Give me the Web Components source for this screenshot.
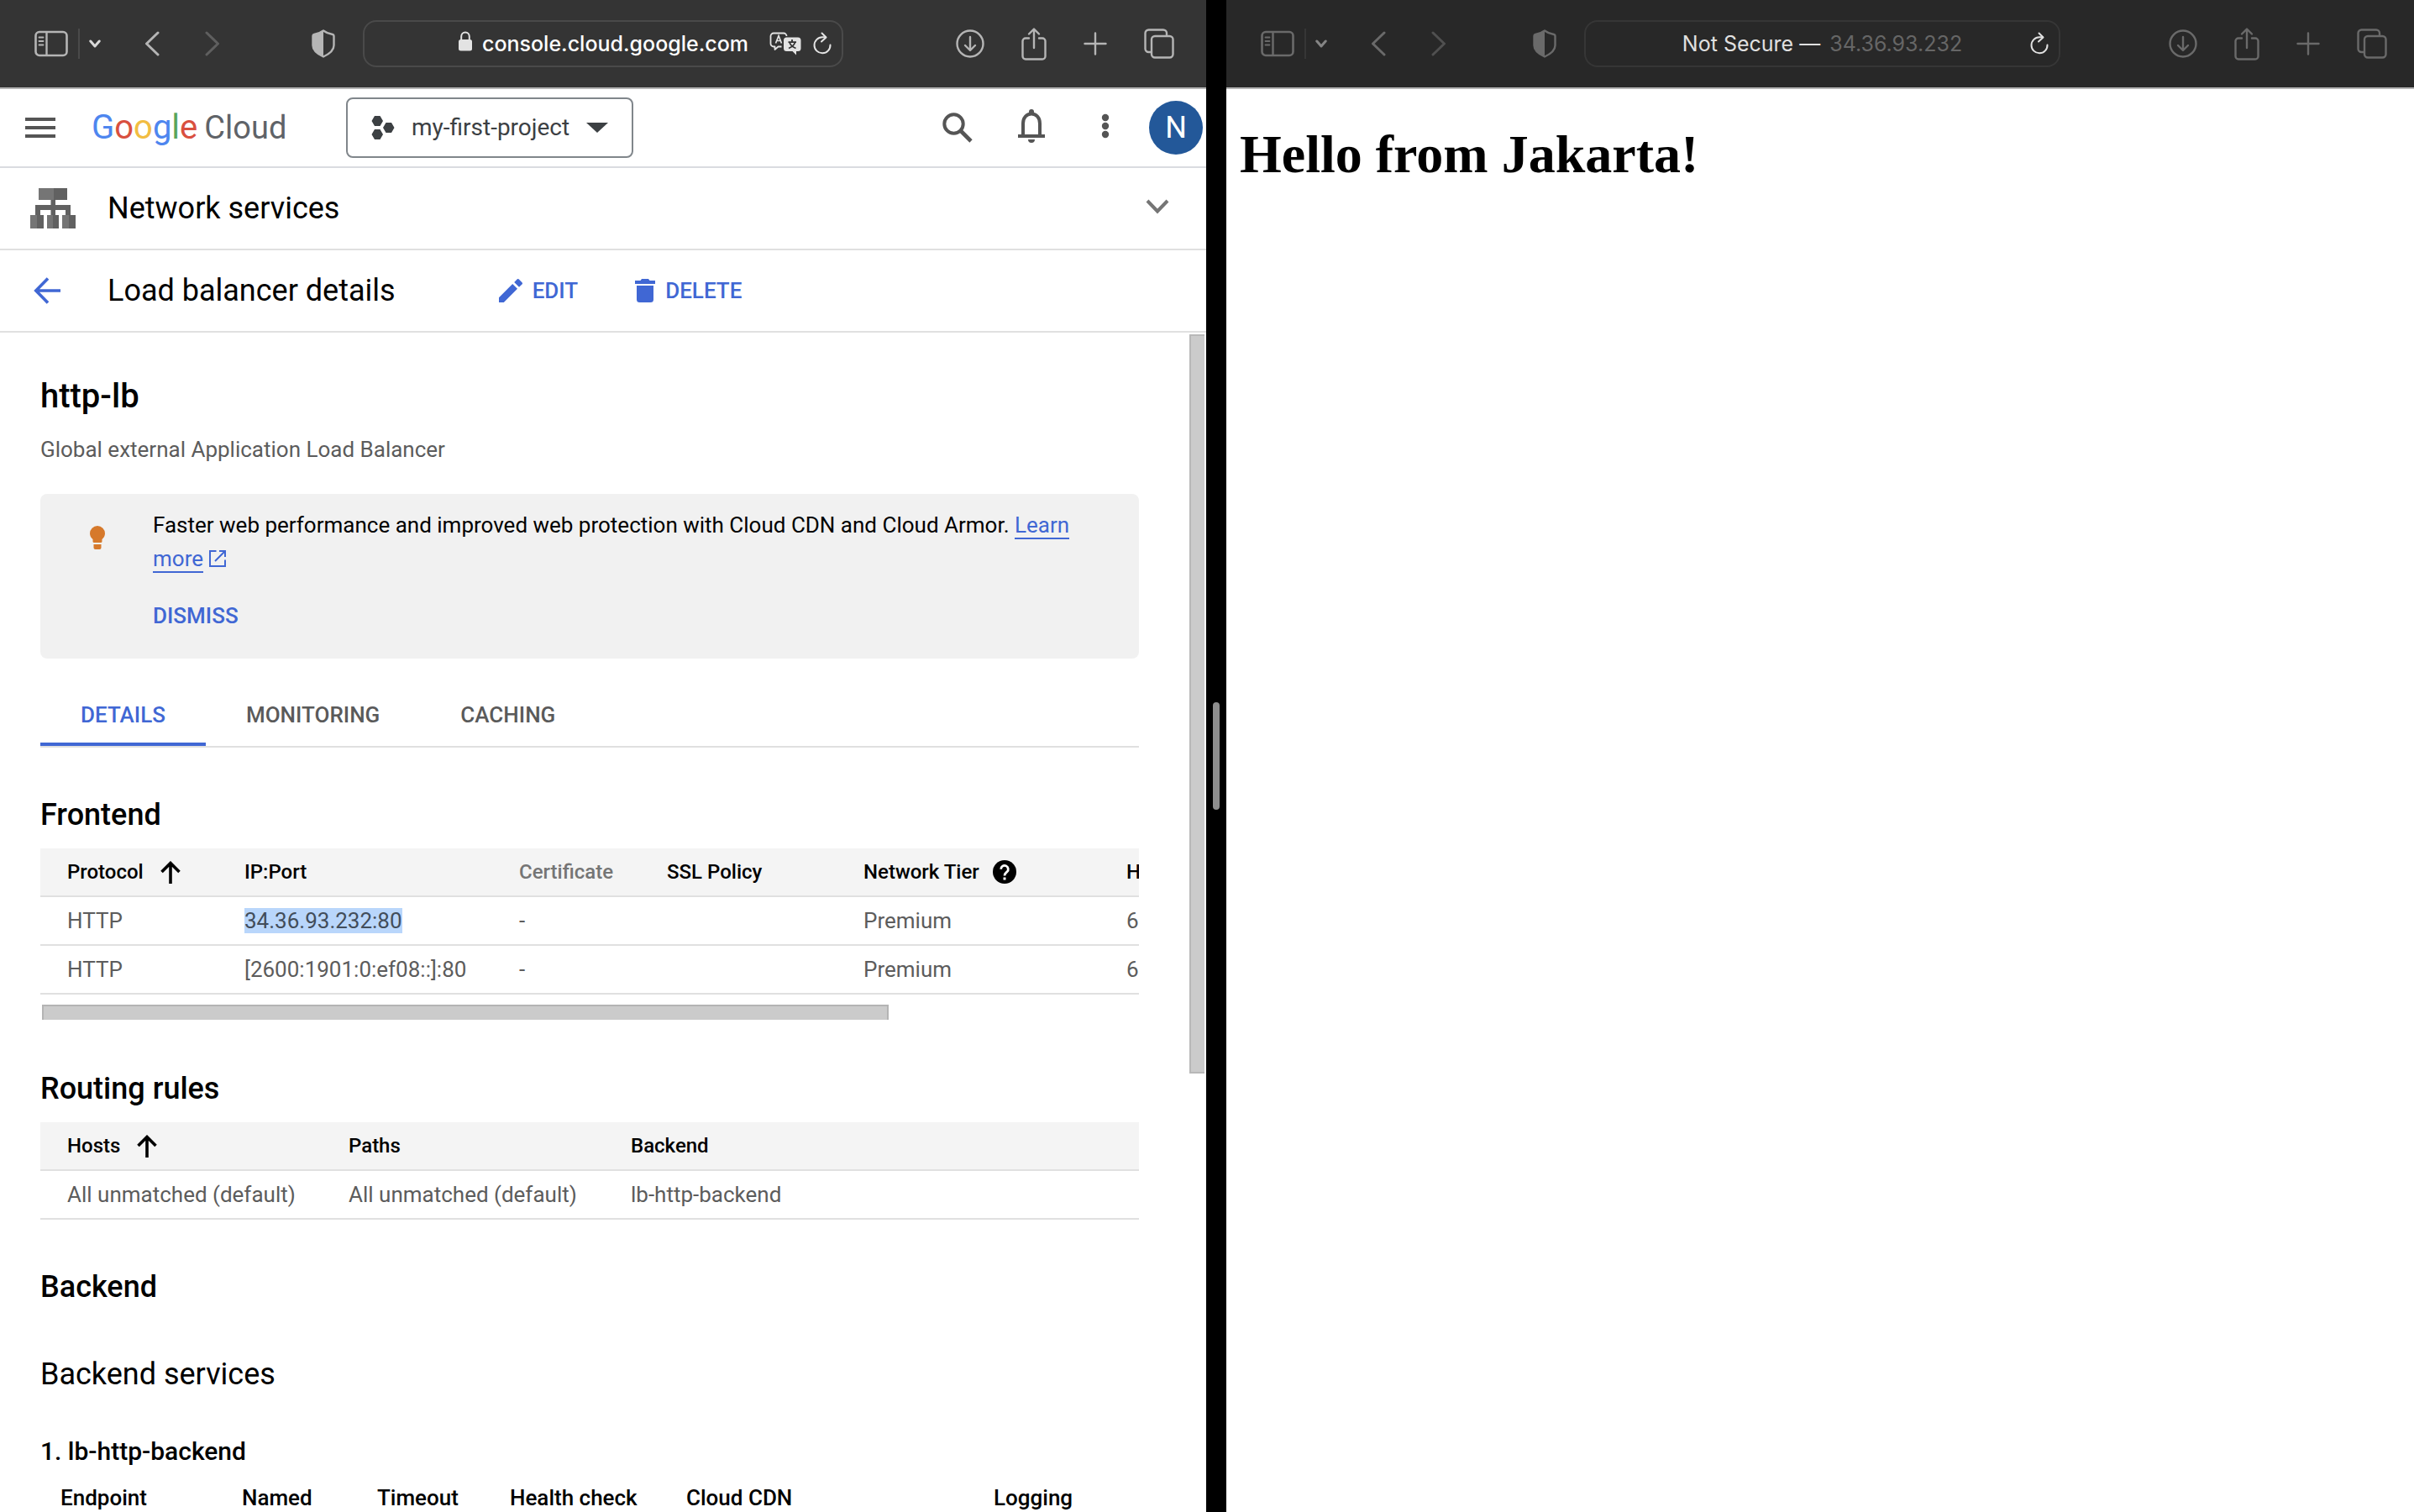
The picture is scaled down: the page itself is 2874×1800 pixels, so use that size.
<!DOCTYPE html>
<html lang="en">
<head>
<meta charset="utf-8">
<title>Load balancer details – Google Cloud console</title>
<style>
  html, body { margin: 0; height: 100%; }
  body { font-family: Roboto, "Liberation Sans", sans-serif; background: #000; overflow: hidden; }
</style>
</head>
<body>
<split-screen>
  <safari-window slot="primary">
    <safari-toolbar slot="toolbar" address="console.cloud.google.com" secure translate-page></safari-toolbar>
    <cloud-console></cloud-console>
  </safari-window>
  <safari-window slot="secondary">
    <safari-toolbar slot="toolbar" address="34.36.93.232" inactive></safari-toolbar>
    <hello-page>Hello from Jakarta!</hello-page>
  </safari-window>
</split-screen>

<script>
const ICONS = {
  sidebar: [40, 32, `<g fill="none" stroke="currentColor"><rect x="1.5" y="2" width="37" height="28" rx="4.5" stroke-width="2.6"/><path d="M14.500 2v28" stroke-width="2.4"/><path d="M5.500 8.500h5M5.500 13h5M5.500 17.500h5" stroke-width="1.800" stroke-linecap="round"/></g>`],
  'chevron-small': [14, 10, `<path d="M1.800 2L7 8l5.200-6" fill="none" stroke="currentColor" stroke-width="3" stroke-linecap="round" stroke-linejoin="round"/>`],
  back: [18, 30, `<path d="M16 2L2.500 15 16 28" fill="none" stroke="currentColor" stroke-width="3" stroke-linecap="round" stroke-linejoin="round"/>`],
  forward: [18, 30, `<path d="M2 2l13.500 13L2 28" fill="none" stroke="currentColor" stroke-width="3" stroke-linecap="round" stroke-linejoin="round"/>`],
  shield: [28, 34, `<path d="M14 1.500C11 3.800 6.500 5.400 3 6c-.9.200-1.500.700-1.500 1.800V19c0 5.500 6 10.500 12.500 13.500C20.500 29.500 26.500 24.500 26.500 19V7.800c0-1.100-.6-1.600-1.500-1.800-3.500-.6-8-2.200-11-4.500z" fill="none" stroke="currentColor" stroke-width="2.400" stroke-linejoin="round"/><path d="M14 1.500C11 3.800 6.500 5.400 3 6c-.9.200-1.500.700-1.500 1.800V19c0 5.500 6 10.500 12.500 13.500z" fill="currentColor"/>`],
  lock: [18, 24, `<rect x="1" y="10" width="16" height="13.500" rx="2.500" fill="currentColor"/><path d="M4.200 11V6.500C4.200 3.500 6.200 1.500 9 1.500s4.800 2 4.800 5V11" fill="none" stroke="currentColor" stroke-width="2"/>`],
  translate: [38, 28, `<path d="M14.500 17.500h-4L6.500 21v-3.500H5A3.500 3.500 0 0 1 1.500 14V5A3.500 3.500 0 0 1 5 1.500h12A3.500 3.500 0 0 1 20.500 5" fill="none" stroke="currentColor" stroke-width="1.800" stroke-linejoin="round"/><path d="M7.500 13.500L11 4.500l3.500 9M8.800 10.500h4.400" fill="none" stroke="currentColor" stroke-width="1.700"/><path d="M20.500 6.500H34A3.500 3.500 0 0 1 37.500 10v9.500A3.500 3.500 0 0 1 34 23h-2v4.500L27.500 23h-7a3.500 3.500 0 0 1-3.500-3.500V10a3.500 3.500 0 0 1 3.500-3.500z" fill="currentColor"/><path d="M27 9v2.500M22.500 12.200h9.500M24 12.500c1 3 4 5.500 7.500 7M30.500 12.500c-1 3-4 5.500-7.500 7" fill="none" stroke="#333" stroke-width="1.800"/>`],
  reload: [22, 28, `<path d="M20.500 15.500A9.500 9.500 0 1 1 11 6.300h4" fill="none" stroke="currentColor" stroke-width="2" stroke-linecap="round"/><path d="M10.500 1.500l5 5-5.500 5" fill="none" stroke="currentColor" stroke-width="2" stroke-linecap="round" stroke-linejoin="round"/>`],
  download: [34, 36, `<g fill="none" stroke="currentColor" stroke-width="2.400" stroke-linecap="round" stroke-linejoin="round"><circle cx="17" cy="18" r="15.500"/><path d="M17 10v15.500M11 20l6 6 6-6"/></g>`],
  share: [30, 40, `<g fill="none" stroke="currentColor" stroke-width="2.400" stroke-linecap="round" stroke-linejoin="round"><path d="M9 13.500H5a3.500 3.500 0 0 0-3.500 3.500v18A3.500 3.500 0 0 0 5 38.500h20a3.500 3.500 0 0 0 3.500-3.500V17a3.500 3.500 0 0 0-3.500-3.500h-4M15 25V3M9 8.500L15 2.500l6 6"/></g>`],
  plus: [28, 28, `<path d="M14 1.500v25M1.500 14h25" fill="none" stroke="currentColor" stroke-width="2.400" stroke-linecap="round"/>`],
  tabs: [36, 36, `<g fill="none" stroke="currentColor" stroke-width="2.400"><path d="M9 28H5.500A4 4 0 0 1 1.500 24V5.500a4 4 0 0 1 4-4H23a4 4 0 0 1 4 4V9"/><rect x="9" y="9" width="25.500" height="25.500" rx="4"/></g>`],
  menu: [36, 24, `<path d="M0 0h36v4H0zM0 10h36v4H0zM0 20h36v4H0z" fill="currentColor"/>`],
  project: [28, 28, `<path d="M4 0h6.500l3.500 6-3.500 6H4L.5 6zM4 16h6.500l3.500 6-3.500 6H4L.5 22zM17.500 8H24l3.500 6-3.500 6h-6.500L14 14z" fill="currentColor"/>`],
  dropdown: [26, 12, `<path d="M0 0h26L13 12z" fill="currentColor"/>`],
  search: [36, 36, `<g fill="none" stroke="currentColor"><circle cx="13.500" cy="13.500" r="11.200" stroke-width="4"/><path d="M21.500 21.500L34 34" stroke-width="4.600"/></g>`],
  bell: [32, 44, `<path d="M0 30h32v4H0zM12 36h8a4 4 0 0 1-8 0z" fill="currentColor"/><path d="M6 31V17c0-6.500 4-11.500 10-11.500S26 10.500 26 17v14" fill="none" stroke="currentColor" stroke-width="4"/><path d="M13 6V3a3 3 0 0 1 6 0v3z" fill="currentColor"/>`],
  more: [10, 34, `<g fill="currentColor"><circle cx="5" cy="5" r="4.200"/><circle cx="5" cy="15" r="4.200"/><circle cx="5" cy="25" r="4.200"/></g>`],
  network: [54, 48, `<path d="M10 0h18v14H10zM0 32h8v16H0zM20 32h7v16h-7zM38 32h8v16h-8z" fill="#757575"/><path d="M28 0h16v14H28zM24.500 14h5.500v6h18v12h-6v-6H30v6h-5.500v-6H12v6H6V20h18.500zM8 32h8v16H8zM27 32h7v16h-7zM46 32h8v16h-8z" fill="#616161"/>`],
  expand: [28, 22, `<path d="M2 2l12 12.500L26 2" fill="none" stroke="currentColor" stroke-width="4"/>`],
  'arrow-back': [32, 32, `<path d="M17 1.500L2.800 16 17 30.500M3 16h29" fill="none" stroke="currentColor" stroke-width="3.600"/>`],
  edit: [28, 28, `<path d="M0 22.200V28h5.800L22 11.800 16.200 6zM27.500 6.400a1.600 1.600 0 0 0 0-2.200L23.800.5a1.600 1.600 0 0 0-2.200 0L18.200 4 24 9.800z" fill="currentColor"/>`],
  trash: [24, 28, `<path d="M0 2h6.500l1.500-2h8l1.500 2H24v4H0zM2 8h20v16.500a3.500 3.500 0 0 1-3.500 3.500h-13A3.500 3.500 0 0 1 2 24.500z" fill="currentColor"/>`],
  bulb: [18, 28, `<path d="M9 0a9 9 0 0 1 9 9c0 3-1.400 5.200-3.500 7v2.500a1.500 1.500 0 0 1-1.500 1.500H5a1.500 1.500 0 0 1-1.500-1.500V16C1.400 14.200 0 12 0 9a9 9 0 0 1 9-9zM4.500 22h9v4a2 2 0 0 1-2 2h-5a2 2 0 0 1-2-2z" fill="currentColor"/>`],
  external: [20, 20, `<path d="M8.500 1H1v18h18v-7.500M12 1h7v7M18.500 1.500L7 13" fill="none" stroke="currentColor" stroke-width="2"/>`],
  sort: [24, 27, `<path d="M1.500 13L12 2.500 22.500 13M12 3v24" fill="none" stroke="currentColor" stroke-width="3.600"/>`],
  help: [28, 28, `<circle cx="14" cy="14" r="14" fill="currentColor"/><path d="M9.700 10.800a4.300 4.300 0 1 1 7.300 3c-1.700 1.500-3 2.200-3 4.700" fill="none" stroke="#fff" stroke-width="2.800"/><rect x="12.500" y="20.500" width="3" height="3" fill="#fff"/>`]
};

const base = `
  :host, *, *::before, *::after { box-sizing: border-box; }
  button { font: inherit; color: inherit; background: none; border: 0; padding: 0; margin: 0; display: flex; align-items: center; justify-content: center; cursor: pointer; }
  h1, h2, h3, p { margin: 0; }
`;

function define(name, html, ready) {
  const template = document.createElement('template');
  template.innerHTML = html;
  customElements.define(name, class extends HTMLElement {
    constructor() {
      super();
      this.attachShadow({ mode: 'open' }).append(template.content.cloneNode(true));
    }
    connectedCallback() { if (ready) ready(this, this.shadowRoot); }
  });
}

define('ui-icon', `<style>:host{display:inline-block;flex:none;line-height:0} svg{display:block}</style>`, (host, root) => {
  const [w, h, body] = ICONS[host.getAttribute('name')];
  root.querySelector('svg')?.remove();
  root.append(document.createRange().createContextualFragment(
    `<svg xmlns="http://www.w3.org/2000/svg" width="${w}" height="${h}" viewBox="0 0 ${w} ${h}" aria-hidden="true">${body}</svg>`));
});

define('split-screen', `
<style>${base}
  :host { display: grid; grid-template-columns: 1436fr 24px 1414fr; height: 100vh; background: #000; }
  .divider { display: flex; align-items: center; justify-content: center; }
  .grip { width: 8px; height: 128px; border-radius: 4px; background: #8e8e8e; }
</style>
<slot name="primary"></slot>
<div class="divider" role="separator" aria-orientation="vertical"><div class="grip"></div></div>
<slot name="secondary"></slot>`);

define('safari-window', `
<style>${base}
  :host { display: flex; flex-direction: column; min-width: 0; min-height: 0; background: #fff; overflow: hidden; }
  .page { flex: 1; min-height: 0; display: flex; flex-direction: column; }
</style>
<slot name="toolbar"></slot>
<div class="page"><slot></slot></div>`);

define('safari-toolbar', `
<style>${base}
  :host { --icon: #b5b5b5; --dim: #5f5f5f; --bright: #e3e3e3; --line: #4a4a4a; --columns: 432fr 572fr 432fr; --end: 38px;
    display: grid; grid-template-columns: var(--columns); align-items: center; flex: none; height: 106px;
    background: #343434; color: var(--icon); border-bottom: 2px solid #000; border-image: linear-gradient(#000 50%, #b4b4b4 50%) 2;
    border-width: 0 0 2px; font-family: Inter, "Liberation Sans", sans-serif; font-size: 25px; line-height: 32px; }
  :host([inactive]) { --icon: #6a6a6a; --dim: #505050; --bright: #e0e0e0; --line: #363636; --columns: 426fr 567fr 421fr; --end: 32px; background: #282828; }
  .start, .end { display: flex; align-items: center; }
  .start { padding: 0 33px 0 41px; }
  .rule { width: 2px; height: 36px; background: var(--line); margin: 0 11px 0 12px; }
  .menu { color: #d8d8d8; margin-right: 52px; }
  :host([inactive]) .menu { color: #858585; }
  .forward { color: var(--dim); margin-left: 54px; }
  .privacy { margin-left: auto; }
  .end { justify-content: flex-end; gap: 44px; padding-right: var(--end); }
  .field { display: grid; grid-template-columns: 1fr auto 1fr; align-items: center; height: 56px; padding: 0 12px;
    border: 2px solid var(--line); border-radius: 16px; color: var(--bright); }
  .address { grid-column: 2; display: flex; align-items: center; gap: 11px; }
  .status { white-space: nowrap; }
  input { font: inherit; field-sizing: content; color: #fff; background: none; border: 0; padding: 0; margin: 0; outline: 0; font-weight: 500; }
  :host([inactive]) input { color: #666; font-weight: 400; }
  .tools { display: flex; align-items: center; justify-content: flex-end; gap: 14px; }
</style>
<div class="start">
  <button aria-label="Show sidebar"><ui-icon name="sidebar"></ui-icon></button>
  <span class="rule"></span>
  <button class="menu" aria-label="Tab groups"><ui-icon name="chevron-small"></ui-icon></button>
  <button aria-label="Back"><ui-icon name="back"></ui-icon></button>
  <button class="forward" aria-label="Forward"><ui-icon name="forward"></ui-icon></button>
  <button class="privacy" aria-label="Privacy report"><ui-icon name="shield"></ui-icon></button>
</div>
<div class="field">
  <div class="address">
    <label class="status" for="url"></label>
    <input id="url" type="text" aria-label="Address">
  </div>
  <div class="tools">
    <button class="translate" aria-label="Translate"><ui-icon name="translate"></ui-icon></button>
    <button aria-label="Reload"><ui-icon name="reload"></ui-icon></button>
  </div>
</div>
<div class="end">
  <button aria-label="Downloads"><ui-icon name="download"></ui-icon></button>
  <button aria-label="Share"><ui-icon name="share"></ui-icon></button>
  <button aria-label="New tab"><ui-icon name="plus"></ui-icon></button>
  <button aria-label="Tab overview"><ui-icon name="tabs"></ui-icon></button>
</div>`, (host, root) => {
  const input = root.querySelector('input');
  input.setAttribute('value', host.getAttribute('address'));
  root.querySelector('.status').innerHTML = host.hasAttribute('secure') ? '<ui-icon name="lock"></ui-icon>' : 'Not Secure —';
  if (!host.hasAttribute('translate-page')) root.querySelector('.translate')?.remove();
});

define('hello-page', `
<style>
  :host { display: block; padding: 0 16px; }
  h1 { margin: 41px 0; font: bold 64px/74px "Liberation Serif", "Times New Roman", serif; color: #000; }
</style>
<h1><slot></slot></h1>`);

define('console-header', `
<style>${base}
  :host { display: flex; align-items: center; flex: none; height: 94px; padding: 0 4px 0 30px; border-bottom: 2px solid #dadce0; color: #555; }
  .logo { display: flex; align-items: baseline; gap: 8px; width: 257px; margin: 0 46px 0 43px; font-size: 40px; line-height: 48px; color: #5f6368; text-decoration: none; }
  .cloud { font-size: 38px; }
  .b { color: #4e86ef } .r { color: #d9503f } .y { color: #f2bd42 } .g { color: #58a55c }
  .project { height: 72px; padding: 0 28px; gap: 20px; border: 2px solid #80868b; border-radius: 8px; color: #3c4043; font-size: 28px; line-height: 32px; }
  nav { display: flex; align-items: center; gap: 40px; margin-left: auto; }
  nav button { width: 48px; height: 48px; }
  .avatar { width: 64px; height: 64px; margin-left: 28px; border-radius: 50%; background: #235899; color: #fff; font-size: 36px; }
</style>
<button aria-label="Main menu"><ui-icon name="menu"></ui-icon></button>
<a class="logo" href="#"><span><span class="b">G</span><span class="r">o</span><span class="y">o</span><span class="b">g</span><span class="g">l</span><span class="r">e</span></span><span class="cloud">Cloud</span></a>
<button class="project"><ui-icon name="project"></ui-icon><span>my-first-project</span><ui-icon name="dropdown"></ui-icon></button>
<nav>
  <button aria-label="Search"><ui-icon name="search"></ui-icon></button>
  <button aria-label="Notifications"><ui-icon name="bell"></ui-icon></button>
  <button aria-label="More"><ui-icon name="more"></ui-icon></button>
</nav>
<button class="avatar">N</button>`);

define('console-bar', `
<style>${base}
  :host { display: flex; align-items: center; flex: none; height: 98px; padding: 0 44px 0 36px; border-bottom: 2px solid #e0e0e0; color: #000; font-size: 36px; line-height: 48px; }
  .lead { flex: 0 0 92px; display: flex; align-items: center; }
</style>
<span class="lead"><slot name="lead"></slot></span>
<slot></slot>`);

define('icon-action', `
<style>${base}
  :host { display: block; color: #4067d4; font-size: 26px; line-height: 40px; font-weight: 500; }
  button { gap: 12px; }
</style>
<button><slot name="icon"></slot><slot></slot></button>`);

define('tip-banner', `
<style>${base}
  :host { display: grid; grid-template-columns: 134px 1fr; padding: 17px 48px 31px 0; border-radius: 8px; background: #f1f1f1; color: #000; font-size: 26px; line-height: 40px; }
  .bulb { display: flex; align-items: flex-start; color: #d6792b; padding: 21px 0 0 59px; }
  a { color: #4067d4; text-decoration: none; border-bottom: 2px solid; }
  .ext { color: #4067d4; margin-left: 7px; vertical-align: -1px; }
  button { margin-top: 28px; color: #4067d4; font-weight: 500; }
</style>
<div class="bulb"><ui-icon name="bulb"></ui-icon></div>
<div>
  <p><slot></slot> <a href="#">Learn more</a><ui-icon class="ext" name="external"></ui-icon></p>
  <button>DISMISS</button>
</div>`);

define('detail-tabs', `
<style>${base}
  :host { display: flex; border-bottom: 2px solid #e0e0e0; color: #5a5a5a; font-size: 26px; line-height: 40px; font-weight: 500; }
  button { padding: 15px 48px 13px; border-bottom: 4px solid transparent; }
  button[aria-selected="true"] { color: #4067d4; border-color: #4067d4; }
</style>
<button role="tab" aria-selected="true">DETAILS</button>
<button role="tab" aria-selected="false">MONITORING</button>
<button role="tab" aria-selected="false">CACHING</button>`);

const tableStyle = `${base}
  :host { display: block; }
  .view { overflow: hidden; }
  table { table-layout: fixed; border-collapse: separate; border-spacing: 0; width: 100%; font-size: 26px; line-height: 32px; color: #5c5c5c; }
  th, td { height: 58px; padding: 0 0 0 32px; text-align: left; white-space: nowrap; border-bottom: 2px solid #e0e0e0; overflow: hidden; }
  th { background: #f4f4f4; color: #000; font-size: 24px; font-weight: 500; }
  .head { display: flex; align-items: center; gap: 20px; }
  .muted { color: #757575; }
`;

define('frontend-table', `
<style>${tableStyle}
  table { width: 1697px; }
  .tier { gap: 16px; }
  mark { background: #b9d6fb; color: #424d5a; }
  .track { height: 32px; padding: 12px 0 2px 2px; }
  .thumb { width: 77.2%; height: 18px; background: #cbcbcb; border: solid #b4b4b4; border-width: 2px 2px 0 2px; }
</style>
<div class="view">
<table>
  <colgroup><col style="width:211px"><col style="width:327px"><col style="width:176px"><col style="width:234px"><col style="width:313px"><col></colgroup>
  <thead><tr>
    <th scope="col"><span class="head">Protocol <ui-icon name="sort"></ui-icon></span></th><th scope="col">IP:Port</th><th scope="col" class="muted">Certificate</th><th scope="col">SSL Policy</th>
    <th scope="col"><span class="head tier">Network Tier <ui-icon name="help"></ui-icon></span></th><th scope="col">H</th>
  </tr></thead>
  <tbody>
    <tr><td>HTTP</td><td><mark>34.36.93.232:80</mark></td><td>-</td><td></td><td>Premium</td><td>6</td></tr>
    <tr><td>HTTP</td><td>[2600:1901:0:ef08::]:80</td><td>-</td><td></td><td>Premium</td><td>6</td></tr>
  </tbody>
</table>
</div>
<div class="track"><div class="thumb"></div></div>`);

define('routing-table', `
<style>${tableStyle}</style>
<table>
  <colgroup><col style="width:335px"><col style="width:336px"><col></colgroup>
  <thead><tr><th scope="col"><span class="head">Hosts <ui-icon name="sort"></ui-icon></span></th><th scope="col">Paths</th><th scope="col">Backend</th></tr></thead>
  <tbody><tr><td>All unmatched (default)</td><td>All unmatched (default)</td><td>lb-http-backend</td></tr></tbody>
</table>`);

define('backend-table', `
<style>${tableStyle}
  th { height: 40px; padding-left: 24px; background: none; border: 0; font-size: 26px; line-height: 40px; }
</style>
<table>
  <colgroup><col style="width:216px"><col style="width:161px"><col style="width:158px"><col style="width:210px"><col style="width:366px"><col></colgroup>
  <thead><tr><th scope="col">Endpoint</th><th scope="col">Named</th><th scope="col">Timeout</th><th scope="col">Health check</th><th scope="col">Cloud CDN</th><th scope="col">Logging</th></tr></thead>
</table>`);

define('load-balancer-details', `
<style>${base}
  :host { display: grid; grid-template-columns: minmax(0, 1fr) 20px; flex: 1; min-height: 0; overflow: hidden; }
  main { padding: 52px 60px 0 48px; color: #000; min-height: 0; }
  h1 { font-size: 40px; line-height: 48px; font-weight: 500; }
  h2 { margin: 56px 0 16px; font-size: 36px; line-height: 48px; font-weight: 500; }
  h2.services { font-weight: 400; margin-bottom: 48px; }
  h3 { margin-bottom: 15px; font-size: 30px; line-height: 40px; font-weight: 500; }
  .kind { margin: 19px 0 33px; font-size: 26px; line-height: 40px; color: #5c5c5c; }
  detail-tabs { margin-top: 32px; }
  .track { padding-top: 2px; }
  .thumb { width: 18px; height: 62.8%; background: #cbcbcb; border: solid #b8b8b8; border-width: 2px 0 2px 2px; }
</style>
<main>
  <h1>http-lb</h1>
  <p class="kind">Global external Application Load Balancer</p>
  <tip-banner>Faster web performance and improved web protection with Cloud CDN and Cloud Armor.</tip-banner>
  <detail-tabs role="tablist"></detail-tabs>
  <h2>Frontend</h2>
  <frontend-table></frontend-table>
  <h2>Routing rules</h2>
  <routing-table></routing-table>
  <h2>Backend</h2>
  <h2 class="services">Backend services</h2>
  <h3>1. lb-http-backend</h3>
  <backend-table></backend-table>
</main>
<div class="track"><div class="thumb"></div></div>`);

define('cloud-console', `
<style>${base}
  :host { display: flex; flex-direction: column; flex: 1; min-height: 0; font-family: Roboto, "Liberation Sans", sans-serif; }
  .expand { margin-left: auto; color: #757575; }
  .back { color: #4067d4; margin-left: 4px; }
  .edit { margin-left: 123px; }
  .delete { margin-left: 68px; }
</style>
<console-header></console-header>
<console-bar>
  <ui-icon slot="lead" name="network"></ui-icon>
  <span>Network services</span>
  <button class="expand" aria-label="Expand"><ui-icon name="expand"></ui-icon></button>
</console-bar>
<console-bar>
  <button slot="lead" class="back" aria-label="Back"><ui-icon name="arrow-back"></ui-icon></button>
  <span>Load balancer details</span>
  <icon-action class="edit"><ui-icon slot="icon" name="edit"></ui-icon>EDIT</icon-action>
  <icon-action class="delete"><ui-icon slot="icon" name="trash"></ui-icon>DELETE</icon-action>
</console-bar>
<load-balancer-details></load-balancer-details>`);
</script>
</body>
</html>
